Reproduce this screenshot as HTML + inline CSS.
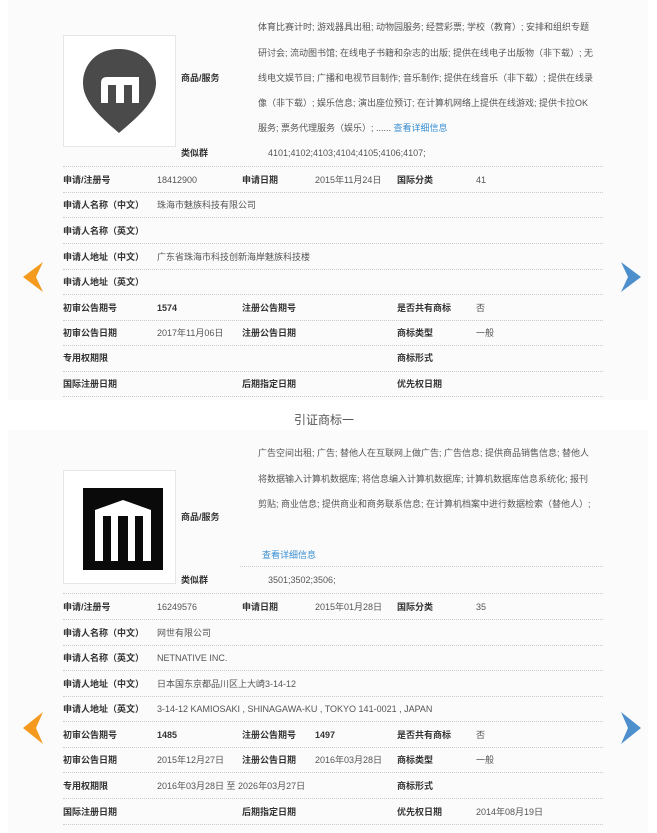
<!DOCTYPE html>
<html><head><meta charset="utf-8"><style>
body{margin:0;width:657px;height:833px;background:#fff;position:relative;overflow:hidden;font-family:"Liberation Sans","Noto Sans CJK SC",sans-serif;font-size:9px;color:#555}
.a{position:absolute;white-space:nowrap;line-height:12px}
.l{color:#333;font-weight:bold}
.b{font-weight:bold;color:#333}
.bg{position:absolute;left:8px;width:640px;background:#fbfbfb}
.ln{position:absolute;left:63px;width:540px;border-top:1px dotted #ccc}
.link{color:#3a8fd1}
</style></head><body>
<div class="bg" style="top:0;height:400px"></div>
<div class="bg" style="top:430px;height:403px"></div>

<div style="position:absolute;left:63px;top:35px;width:111px;height:110px;border:1px solid #e6e6e6;background:#fff"></div>
<svg style="position:absolute;left:63px;top:35px" width="112" height="110">
<path d="M56 14 C33 14 20 30 20 48 C20 68 40 84 56 98 C72 84 93 68 93 48 C93 30 79 14 56 14Z" fill="#4a4a4a"/>
<path d="M38 68 V48 Q38 42 44 42 H76 V68 H69 V50 H61 V68 H53 V50 H45 V68Z" fill="#fff"/>
</svg>

<div class="a" style="left:258px;top:21px">体育比赛计时; 游戏器具出租; 动物园服务; 经营彩票; 学校（教育）; 安排和组织专题</div>
<div class="a" style="left:258px;top:47px">研讨会; 流动图书馆; 在线电子书籍和杂志的出版; 提供在线电子出版物（非下载）; 无</div>
<div class="a" style="left:258px;top:72px">线电文娱节目; 广播和电视节目制作; 音乐制作; 提供在线音乐（非下载）; 提供在线录</div>
<div class="a" style="left:258px;top:97px">像（非下载）; 娱乐信息; 演出座位预订; 在计算机网络上提供在线游戏; 提供卡拉OK</div>
<div class="a" style="left:258px;top:122px">服务; 票务代理服务（娱乐）; ...... <span class="link">查看详细信息</span></div>
<div class="a l" style="left:181px;top:72px">商品/服务</div>
<div class="a l" style="left:181px;top:147px">类似群</div>
<div class="a" style="left:268px;top:147px">4101;4102;4103;4104;4105;4106;4107;</div>

<div class="ln" style="top:166px"></div>
<div class="a l" style="left:63px;top:174px">申请/注册号</div><div class="a" style="left:157px;top:174px">18412900</div><div class="a l" style="left:242px;top:174px">申请日期</div><div class="a" style="left:315px;top:174px">2015年11月24日</div><div class="a l" style="left:397px;top:174px">国际分类</div><div class="a" style="left:476px;top:174px">41</div>
<div class="ln" style="top:192px"></div>
<div class="a l" style="left:63px;top:199px">申请人名称（中文）</div><div class="a" style="left:157px;top:199px">珠海市魅族科技有限公司</div>
<div class="ln" style="top:217px"></div>
<div class="a l" style="left:63px;top:225px">申请人名称（英文）</div>
<div class="ln" style="top:243px"></div>
<div class="a l" style="left:63px;top:251px">申请人地址（中文）</div><div class="a" style="left:157px;top:251px">广东省珠海市科技创新海岸魅族科技楼</div>
<div class="ln" style="top:269px"></div>
<div class="a l" style="left:63px;top:276px">申请人地址（英文）</div>
<div class="ln" style="top:294px"></div>
<div class="a l" style="left:63px;top:302px">初审公告期号</div><div class="a b" style="left:157px;top:302px">1574</div><div class="a l" style="left:242px;top:302px">注册公告期号</div><div class="a l" style="left:397px;top:302px">是否共有商标</div><div class="a" style="left:476px;top:302px">否</div>
<div class="ln" style="top:320px"></div>
<div class="a l" style="left:63px;top:327px">初审公告日期</div><div class="a" style="left:157px;top:327px">2017年11月06日</div><div class="a l" style="left:242px;top:327px">注册公告日期</div><div class="a l" style="left:397px;top:327px">商标类型</div><div class="a" style="left:476px;top:327px">一般</div>
<div class="ln" style="top:345px"></div>
<div class="a l" style="left:63px;top:352px">专用权期限</div><div class="a l" style="left:397px;top:352px">商标形式</div>
<div class="ln" style="top:371px"></div>
<div class="a l" style="left:63px;top:378px">国际注册日期</div><div class="a l" style="left:242px;top:378px">后期指定日期</div><div class="a l" style="left:397px;top:378px">优先权日期</div>
<div class="ln" style="top:396px"></div>

<div class="a" style="left:294px;top:412px;font-size:12px;line-height:16px;color:#555">引证商标一</div>

<div style="position:absolute;left:63px;top:470px;width:111px;height:112px;border:1px solid #e6e6e6;background:#fff"></div>
<div style="position:absolute;left:83px;top:488px;width:80px;height:82px;background:#0a0a0a"></div>
<svg style="position:absolute;left:83px;top:488px" width="80" height="82">
<path d="M12 73 V22 L40 12 L68 22 V73 H60 V28 H52 V73 H45 V28 H35 V73 H28 V28 H20 V73Z" fill="#fff"/>
</svg>

<div class="a" style="left:258px;top:447px">广告空间出租; 广告; 替他人在互联网上做广告; 广告信息; 提供商品销售信息; 替他人</div>
<div class="a" style="left:258px;top:473px">将数据输入计算机数据库; 将信息编入计算机数据库; 计算机数据库信息系统化; 报刊</div>
<div class="a" style="left:258px;top:498px">剪贴; 商业信息; 提供商业和商务联系信息; 在计算机档案中进行数据检索（替他人）;</div>
<div class="a link" style="left:262px;top:549px">查看详细信息</div>
<div class="a l" style="left:181px;top:511px">商品/服务</div>
<div class="ln" style="top:566px;left:240px;width:363px"></div>
<div class="a l" style="left:181px;top:574px">类似群</div>
<div class="a" style="left:268px;top:574px">3501;3502;3506;</div>

<div class="ln" style="top:593px"></div>
<div class="a l" style="left:63px;top:601px">申请/注册号</div><div class="a" style="left:157px;top:601px">16249576</div><div class="a l" style="left:242px;top:601px">申请日期</div><div class="a" style="left:315px;top:601px">2015年01月28日</div><div class="a l" style="left:397px;top:601px">国际分类</div><div class="a" style="left:476px;top:601px">35</div>
<div class="ln" style="top:619px"></div>
<div class="a l" style="left:63px;top:627px">申请人名称（中文）</div><div class="a" style="left:157px;top:627px">网世有限公司</div>
<div class="ln" style="top:645px"></div>
<div class="a l" style="left:63px;top:652px">申请人名称（英文）</div><div class="a" style="left:157px;top:652px">NETNATIVE INC.</div>
<div class="ln" style="top:670px"></div>
<div class="a l" style="left:63px;top:678px">申请人地址（中文）</div><div class="a" style="left:157px;top:678px">日本国东京都品川区上大崎3-14-12</div>
<div class="ln" style="top:696px"></div>
<div class="a l" style="left:63px;top:703px">申请人地址（英文）</div><div class="a" style="left:157px;top:703px">3-14-12 KAMIOSAKI , SHINAGAWA-KU , TOKYO 141-0021 , JAPAN</div>
<div class="ln" style="top:721px"></div>
<div class="a l" style="left:63px;top:729px">初审公告期号</div><div class="a b" style="left:157px;top:729px">1485</div><div class="a l" style="left:242px;top:729px">注册公告期号</div><div class="a b" style="left:315px;top:729px">1497</div><div class="a l" style="left:397px;top:729px">是否共有商标</div><div class="a" style="left:476px;top:729px">否</div>
<div class="ln" style="top:747px"></div>
<div class="a l" style="left:63px;top:754px">初审公告日期</div><div class="a" style="left:157px;top:754px">2015年12月27日</div><div class="a l" style="left:242px;top:754px">注册公告日期</div><div class="a" style="left:315px;top:754px">2016年03月28日</div><div class="a l" style="left:397px;top:754px">商标类型</div><div class="a" style="left:476px;top:754px">一般</div>
<div class="ln" style="top:772px"></div>
<div class="a l" style="left:63px;top:780px">专用权期限</div><div class="a" style="left:157px;top:780px">2016年03月28日 至 2026年03月27日</div><div class="a l" style="left:397px;top:780px">商标形式</div>
<div class="ln" style="top:798px"></div>
<div class="a l" style="left:63px;top:806px">国际注册日期</div><div class="a l" style="left:242px;top:806px">后期指定日期</div><div class="a l" style="left:397px;top:806px">优先权日期</div><div class="a" style="left:476px;top:806px">2014年08月19日</div>
<div class="ln" style="top:824px"></div>

<svg style="position:absolute;left:0;top:0" width="657" height="833">
<polygon points="43,262 23,277 43,292 36,277" fill="#f39a1f"/>
<polygon points="621,262 641,277 621,292 628,277" fill="#4d8fcc"/>
<polygon points="43,712 23,728 43,744 36,728" fill="#f39a1f"/>
<polygon points="621,712 641,728 621,744 628,728" fill="#4d8fcc"/>
</svg>
</body></html>
